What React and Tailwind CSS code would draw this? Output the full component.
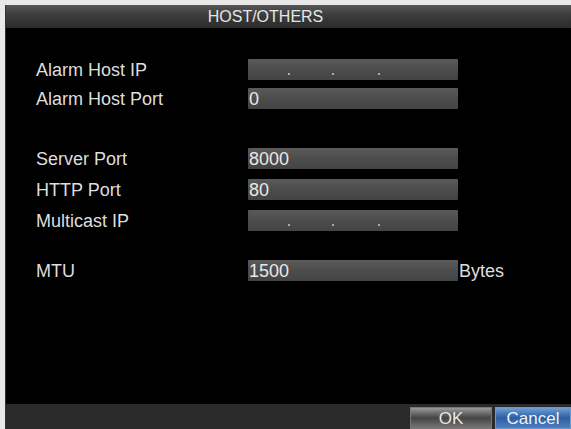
const rows = [
  { label: "Alarm Host IP", ip: true, mt: "mt-[31px]" },
  { label: "Alarm Host Port", value: "0", mt: "mt-[8px]" },
  { label: "Server Port", value: "8000", mt: "mt-[39px]" },
  { label: "HTTP Port", value: "80", mt: "mt-[10px]" },
  { label: "Multicast IP", ip: true, mt: "mt-[10px]" },
  { label: "MTU", value: "1500", unit: "Bytes", mt: "mt-[29px]" },
];

const Field = ({ value, ip }) => (
  <div className="relative w-[210px] h-[21px] bg-gradient-to-b from-[#5a5a5a] via-[#4c4c4c] to-[#444] rounded-[1px] flex items-center">
    {value && (
      <span className="pl-[1px] text-[18px] leading-none text-[#e8e8e8]">{value}</span>
    )}
    {ip && (
      <>
        <span className="absolute left-[40px] top-[14px] w-[2px] h-[2px] bg-[#aaa]" />
        <span className="absolute left-[84px] top-[14px] w-[2px] h-[2px] bg-[#aaa]" />
        <span className="absolute left-[130px] top-[14px] w-[2px] h-[2px] bg-[#aaa]" />
      </>
    )}
  </div>
);

export default function App() {
  return (
    <div
      className="w-[571px] h-[429px] bg-[#e8e8e8] pt-[5px] pl-[5px] overflow-hidden"
      style={{ fontFamily: '"Liberation Sans", Arial, sans-serif' }}
    >
      <div className="w-[566px] h-[424px] bg-black flex flex-col border-l border-[#333]">
        {/* Header */}
        <div className="h-[23px] bg-gradient-to-b from-[#555] via-[#3a3a3a] to-[#2c2c2c] flex items-center justify-center pr-[46px]">
          <span className="text-[16px] leading-none text-[#e6e6e6]">HOST/OTHERS</span>
        </div>

        {/* Body */}
        <div className="flex-1 flex flex-col pl-[30px]">
          {rows.map((r) => (
            <div key={r.label} className={`flex items-center h-[21px] ${r.mt}`}>
              <span className="w-[212px] text-[18px] leading-none text-[#dedede]">{r.label}</span>
              <Field value={r.value} ip={r.ip} />
              {r.unit && (
                <span className="ml-[1px] text-[18px] leading-none text-[#dedede]">{r.unit}</span>
              )}
            </div>
          ))}
        </div>

        {/* Footer */}
        <div className="h-[25px] bg-[#2a2a2a] flex items-end justify-end">
          <div className="w-[82px] h-[22px] bg-gradient-to-b from-[#9a9a9a] via-[#444] to-[#777] flex items-center justify-center mr-[3px] border border-[#777]">
            <span className="text-[17px] leading-none text-[#e8e8e8]">OK</span>
          </div>
          <div className="w-[76px] h-[22px] bg-gradient-to-b from-[#6f9fd8] via-[#2d5e9e] to-[#4d80c0] flex items-center justify-center border border-[#6a9ad0]">
            <span className="text-[17px] leading-none text-[#eef4ff]">Cancel</span>
          </div>
        </div>
      </div>
    </div>
  );
}
